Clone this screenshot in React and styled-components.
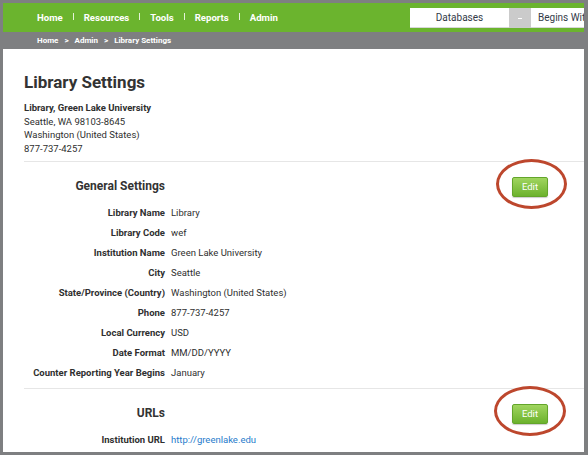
import React from 'react';
import styled, { createGlobalStyle } from 'styled-components';

const GlobalStyle = createGlobalStyle`
  html, body {
    margin: 0;
    padding: 0;
    background: #7e7f81;
  }
  body {
    font-family: Roboto, "Liberation Sans", Arial, sans-serif;
  }
`;

const Frame = styled.div`
  width: 588px;
  height: 455px;
  box-sizing: border-box;
  padding: 3px 4px 3px 3px;
  display: flex;
  flex-direction: column;
  overflow: hidden;
  background: #7e7f81;
`;

const NavBar = styled.nav`
  height: 29px;
  flex: none;
  background: #6bb42e;
  display: flex;
  align-items: center;
  padding-left: 34px;
  overflow: hidden;
`;

const NavLinks = styled.ul`
  display: flex;
  align-items: center;
  list-style: none;
  margin: 0;
  padding: 0;
`;

const NavItem = styled.li`
  color: #fff;
  font-size: 9.6px;
  font-weight: 700;
  display: flex;
  align-items: center;

  & + &::before {
    content: '';
    display: inline-block;
    width: 1px;
    height: 7px;
    background: #e4f2d6;
    margin: 0 10px 2px;
  }
`;

const Search = styled.div`
  margin-left: auto;
  display: flex;
  height: 20px;
  margin-top: 1px;
`;

const SearchField = styled.div`
  width: ${(p) => p.$w}px;
  flex: none;
  background: #fff;
  color: #333a48;
  font-size: 10px;
  display: flex;
  align-items: center;
  justify-content: ${(p) => (p.$center ? 'center' : 'flex-start')};
  padding-left: ${(p) => (p.$center ? 0 : 7)}px;
  box-sizing: border-box;
  white-space: nowrap;
  overflow: hidden;
  border-bottom: 1px solid #d8d8d8;
`;

const Caret = styled.div`
  width: 22px;
  flex: none;
  background: #cbcbcb;
  display: flex;
  align-items: center;
  justify-content: center;

  &::after {
    content: '';
    width: 4px;
    height: 1px;
    background: #fff;
  }
`;

const Crumbs = styled.div`
  height: 17px;
  flex: none;
  padding-left: 34px;
  display: flex;
  align-items: center;
  color: #fff;
  font-size: 8px;
  font-weight: 700;
  gap: 6px;
`;

const Content = styled.main`
  flex: 1;
  background: #fff;
  padding-left: 21px;
  overflow: hidden;
  color: #2f2f2f;
`;

const Title = styled.h1`
  margin: 21px 0 7px;
  font-size: 17px;
  line-height: 24px;
  font-weight: 700;
  color: #333;
`;

const Address = styled.address`
  font-style: normal;
  font-size: 9.5px;
  line-height: 13.5px;
  padding-bottom: 6px;

  strong {
    font-weight: 700;
  }
`;

const Section = styled.section`
  border-top: 1px solid #e6e6e6;
  padding: 13px 36px 6px 0;
`;

const SectionHead = styled.div`
  display: grid;
  grid-template-columns: 141px 1fr auto;
  align-items: center;
  height: 20px;
  margin-bottom: 7px;
`;

const SectionTitle = styled.h2`
  margin: 0;
  text-align: right;
  font-size: 12px;
  font-weight: 700;
  color: #333;
`;

const EditWrap = styled.div`
  grid-column: 3;
  position: relative;
`;

const EditButton = styled.button`
  width: 36px;
  height: 20px;
  border: 1px solid #63a52a;
  border-radius: 2px;
  background: linear-gradient(#a0d55f, #6cb22d);
  color: #fff;
  font-family: inherit;
  font-size: 9.5px;
  padding: 0;
  box-shadow: 0 1px 1px rgba(0, 0, 0, 0.2);
`;

const Callout = styled.span`
  position: absolute;
  left: ${(p) => p.$l}px;
  top: -16px;
  width: ${(p) => p.$w}px;
  height: 50px;
  box-sizing: border-box;
  border: 3px solid #bd472d;
  border-radius: 50%;
  pointer-events: none;
`;

const Fields = styled.dl`
  display: grid;
  grid-template-columns: 141px 1fr;
  column-gap: 6px;
  grid-auto-rows: 20px;
  align-items: center;
  margin: 0;
  font-size: 9.5px;
`;

const Label = styled.dt`
  text-align: right;
  font-weight: 700;
  white-space: nowrap;
`;

const Value = styled.dd`
  margin: 0;
  white-space: nowrap;
`;

const Link = styled.a`
  color: #1f7ccc;
  text-decoration: none;
`;

const general = [
  ['Library Name', 'Library'],
  ['Library Code', 'wef'],
  ['Institution Name', 'Green Lake University'],
  ['City', 'Seattle'],
  ['State/Province (Country)', 'Washington (United States)'],
  ['Phone', '877-737-4257'],
  ['Local Currency', 'USD'],
  ['Date Format', 'MM/DD/YYYY'],
  ['Counter Reporting Year Begins', 'January'],
];

function SettingsSection({ title, callout, children }) {
  return (
    <Section>
      <SectionHead>
        <SectionTitle>{title}</SectionTitle>
        <EditWrap>
          <EditButton type="button">Edit</EditButton>
          <Callout $l={callout.l} $w={callout.w} />
        </EditWrap>
      </SectionHead>
      <Fields>{children}</Fields>
    </Section>
  );
}

export default function App() {
  return (
    <>
      <GlobalStyle />
      <Frame>
        <NavBar>
          <NavLinks>
            {['Home', 'Resources', 'Tools', 'Reports', 'Admin'].map((n) => (
              <NavItem key={n}>{n}</NavItem>
            ))}
          </NavLinks>
          <Search>
            <SearchField $w={99} $center>Databases</SearchField>
            <Caret />
            <SearchField $w={53}>Begins With</SearchField>
          </Search>
        </NavBar>
        <Crumbs>
          <span>Home</span>
          <span>&gt;</span>
          <span>Admin</span>
          <span>&gt;</span>
          <span>Library Settings</span>
        </Crumbs>
        <Content>
          <Title>Library Settings</Title>
          <Address>
            <strong>Library, Green Lake University</strong>
            <br />
            Seattle, WA 98103-8645
            <br />
            Washington (United States)
            <br />
            877-737-4257
          </Address>
          <SettingsSection title="General Settings" callout={{ l: -16, w: 71 }}>
            {general.map(([k, v]) => (
              <React.Fragment key={k}>
                <Label>{k}</Label>
                <Value>{v}</Value>
              </React.Fragment>
            ))}
          </SettingsSection>
          <SettingsSection title="URLs" callout={{ l: -18, w: 72 }}>
            <Label>Institution URL</Label>
            <Value>
              <Link href="#">http://greenlake.edu</Link>
            </Value>
          </SettingsSection>
        </Content>
      </Frame>
    </>
  );
}
